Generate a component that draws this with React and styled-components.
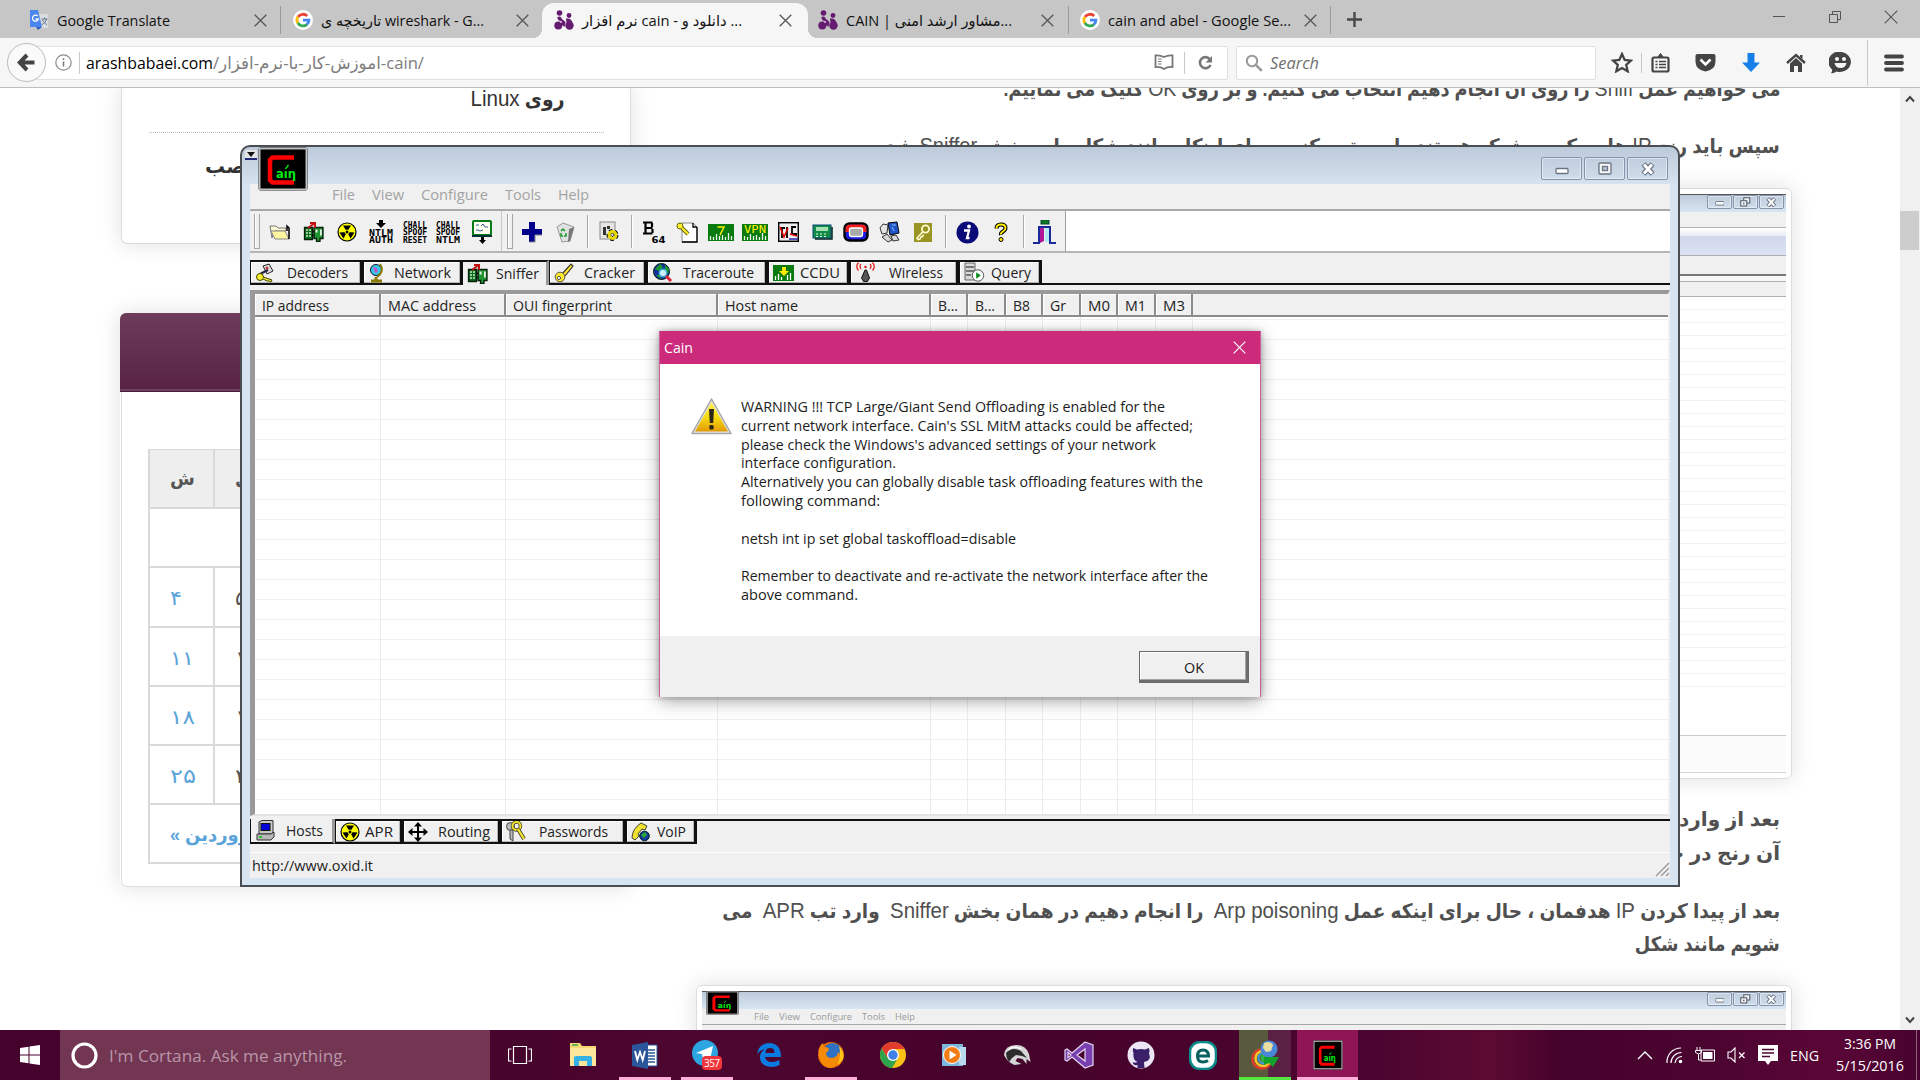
import React, { useLayoutEffect, useRef, useState } from "react";
import styled, { createGlobalStyle, css } from "styled-components";

const UI = `"Open Sans", "Noto Sans", "DejaVu Sans", sans-serif`;
const ARTICLE = `"Liberation Sans", "DejaVu Sans", sans-serif`;

const Global = createGlobalStyle`
  * { box-sizing: border-box; }
  html, body { margin: 0; padding: 0; overflow: hidden; background: #fff; }
  body { font-family: ${UI}; }
  svg { display: block; flex: none; }
`;

/* ---------- label condensed to a given width ---------- */
const FitBox = styled.span`
  display: inline-block;
  flex: none;
  width: ${(p) => p.$w}px;
  white-space: pre;
  text-align: start;
`;
const FitInner = styled.span`
  display: inline-block;
  transform-origin: ${(p) => (p.$rtl ? "100% 50%" : "0 50%")};
`;
function Fit({ w, rtl, children }) {
  const ref = useRef(null);
  const [k, setK] = useState(1);
  useLayoutEffect(() => {
    setK(w / (ref.current.getBoundingClientRect().width || w));
  }, []);
  return (
    <FitBox $w={w} dir={rtl ? "rtl" : "ltr"}>
      <FitInner ref={ref} $rtl={rtl} style={{ transform: `scaleX(${k})` }}>
        {children}
      </FitInner>
    </FitBox>
  );
}

const Screen = styled.div`
  position: relative;
  width: 1920px;
  height: 1080px;
  overflow: hidden;
  display: flex;
  flex-direction: column;
`;

/* ---------- browser chrome ---------- */
const TabStrip = styled.div`
  display: flex;
  height: 38px;
  flex: none;
  background: #c6c6c6;
`;
const Tab = styled.div`
  display: flex;
  align-items: center;
  width: ${(p) => p.$w}px;
  padding: 2px 0 0 ${(p) => p.$pad}px;
  gap: 8px;
  font-size: 15px;
  color: #111;
  position: relative;
  & > svg:last-child { margin-left: auto; margin-right: ${(p) => p.$end}px; }
  ${(p) => p.$sep && css`
    background: linear-gradient(#9a9a9a, #9a9a9a) right 6px / 1px 28px no-repeat;
  `}
`;
const ActiveTab = styled(Tab)`
  margin: 3px 2px 0 4px;
  padding-top: 0;
  padding-bottom: 1px;
  background: #f6f6f6;
  border-radius: 12px 12px 0 0;
  &::before, &::after {
    content: "";
    position: absolute;
    bottom: 0;
    width: 10px;
    height: 10px;
  }
  &::before { left: -10px; background: radial-gradient(circle at 0 0, transparent 10px, #f6f6f6 10.5px); }
  &::after { right: -10px; background: radial-gradient(circle at 100% 0, transparent 10px, #f6f6f6 10.5px); }
`;
const NewTab = styled.div`
  display: flex;
  align-items: center;
  padding: 0 0 0 16px;
`;
const WinButtons = styled.div`
  margin-left: auto;
  display: flex;
  gap: 42px;
  padding: 10px 22px 0 0;
`;
const NavBar = styled.div`
  display: flex;
  align-items: center;
  height: 50px;
  flex: none;
  padding-left: 7px;
  background: #f6f6f6;
  border-bottom: 1px solid #bdbdbd;
`;
const BackButton = styled.div`
  width: 39px;
  height: 39px;
  border: 1px solid #bbb;
  border-radius: 50%;
  background: #fafafa;
  display: grid;
  place-items: center;
  z-index: 1;
`;
const UrlBar = styled.div`
  display: flex;
  align-items: center;
  width: 1192px;
  height: 34px;
  margin-left: -10px;
  padding-left: 18px;
  background: #fff;
  border: 1px solid #e0e0e0;
  border-radius: 0 2px 2px 0;
  font-size: 17px;
  color: #000;
`;
const Rule = styled.div`
  width: 1px;
  height: ${(p) => p.$h}px;
  background: #c8c8c8;
  margin: 0 ${(p) => p.$r || 0}px 0 ${(p) => p.$l || 0}px;
`;
const UrlPath = styled.span`color: #7d7d7d;`;
const Spacer = styled.div`flex: 1;`;
const SearchBar = styled.div`
  display: flex;
  align-items: center;
  gap: 7px;
  width: 360px;
  height: 34px;
  margin-left: 8px;
  padding-left: 8px;
  background: #fff;
  border: 1px solid #e0e0e0;
  border-radius: 2px;
  font-size: 16px;
  font-style: italic;
  color: #707070;
`;
const NavIcon = styled.div`
  width: 45px;
  display: grid;
  place-items: center;
`;

/* ---------- web page ---------- */
const Viewport = styled.div`
  display: flex;
  height: 942px;
  flex: none;
  overflow: hidden;
  background: #fff;
`;
const PageBody = styled.div`
  display: flex;
  width: 1900px;
  justify-content: space-between;
  padding: 0 108px 0 120px;
  overflow: hidden;
`;
const Sidebar = styled.div`
  width: 512px;
  height: 942px;
`;
const PostsCard = styled.div`
  margin-left: 1px;
  width: 510px;
  height: 156px;
  padding: 0 26px 0 27px;
  border: 1px solid #ddd;
  border-top: 0;
  border-radius: 0 0 6px 6px;
  background: #fff;
  box-shadow: 0 0 22px rgba(0, 0, 0, 0.13);
  color: #333;
  font: bold 20px/30px ${ARTICLE};
`;
const PostLink = styled.div`
  display: flex;
  direction: ${(p) => (p.$start ? "ltr" : "rtl")};
  height: ${(p) => p.$h}px;
  padding: 0 ${(p) => (p.$start ? 0 : 40)}px 0 ${(p) => (p.$start ? 56 : 0)}px;
  align-items: flex-end;
  padding-bottom: ${(p) => p.$b}px;
  border-bottom: ${(p) => (p.$start ? "0" : "1px dotted #bbb")};
`;
const Latin = styled.span`
  font-weight: normal;
  font-size: 22px;
`;
const CalendarCard = styled.div`
  width: 511px;
  margin-top: 69px;
  height: 574px;
  border-radius: 6px;
  box-shadow: 0 0 22px rgba(0, 0, 0, 0.13);
`;
const CalendarHead = styled.div`
  height: 79px;
  border-radius: 6px 6px 0 0;
  background: linear-gradient(#6d3c5b, #582342);
  border-bottom: 1px solid #491a36;
  box-shadow: inset 0 -2px 0 #71405f;
`;
const CalendarBody = styled.div`
  height: 495px;
  margin-left: 1px;
  padding: 57px 26px 0;
  border: 1px solid #ddd;
  border-top: 0;
  border-radius: 0 0 6px 6px;
  background: #fff;
`;
const CalendarGrid = styled.div`
  display: grid;
  grid-template-columns: repeat(7, 65px);
  grid-auto-rows: 59.2px;
  gap: 0;
  border: 1px solid #d9d9d9;
  border-width: 1px 0 0 2px;
`;
const Day = styled.div`
  display: flex;
  align-items: center;
  padding: ${(p) => (p.$head ? 0 : 3)}px 0 0 20px;
  border: 1px solid #d9d9d9;
  border-width: 0 ${(p) => (p.$wide ? 0 : 2)}px 2px 0;
  grid-column: ${(p) => (p.$wide ? "1 / -1" : "auto")};
  background: ${(p) => (p.$head ? "#eee" : "#fff")};
  color: ${(p) => (p.$link ? "#5ba4d9" : "#555")};
  font: ${(p) => (p.$bold ? "bold 18px" : "normal 20px")} ${ARTICLE};
  white-space: pre;
`;

const Article = styled.div`
  width: 1096px;
  height: 942px;
  display: flex;
  flex-direction: column;
  align-items: stretch;
  color: #505050;
`;
const Line = styled.div`
  direction: rtl;
  flex: none;
  height: ${(p) => p.$h || 34}px;
  margin-top: ${(p) => p.$t || 0}px;
  padding-right: 12px;
  font: bold 20px/35px ${ARTICLE};
`;
const Shot = styled.div`
  flex: none;
  height: ${(p) => p.$h}px;
  margin-top: ${(p) => p.$t}px;
  padding: 5px;
  border: 1px solid #ddd;
  border-radius: 6px;
  background: #fff;
  box-shadow: 0 0 22px rgba(0, 0, 0, 0.13);
  display: flex;
  flex-direction: column;
  overflow: hidden;
`;
const ShotTitle = styled.div`
  display: flex;
  height: 18px;
  flex: none;
  justify-content: flex-end;
  gap: 1px;
  padding: 0 2px 0 0;
  border-top: 1px solid #555;
  background: linear-gradient(#bccad9, #d8e6f4);
`;
const ShotLogo = styled.div`
  margin: -1px auto 0 4px;
  height: 24px;
  z-index: 1;
`;
const ShotMenu = styled.div`
  display: flex;
  flex: none;
  gap: 10px;
  height: ${(p) => p.$h}px;
  align-items: center;
  padding-left: 52px;
  background: #f0f0f0;
  border-bottom: 1px solid #a8a8a8;
  font-size: 9px;
  color: #9a9a9a;
`;
const ShotBand = styled.div`
  flex: none;
  height: ${(p) => p.$h}px;
  background: ${(p) => p.$bg};
  border-bottom: ${(p) => p.$line || 0}px solid ${(p) => p.$lc || "#b0b0b0"};
`;
const ScrollTrack = styled.div`
  width: 20px;
  background: #f0f0f0;
  display: flex;
  flex-direction: column;
  align-items: center;
  padding: 7px 1px 6px 0;
`;
const ScrollThumb = styled.div`
  width: 19px;
  height: 39px;
  margin-top: 108px;
  margin-bottom: auto;
  background: #cdcdcd;
`;

/* ---------- Cain window ---------- */
const CainWindow = styled.div`
  position: absolute;
  left: 240px;
  top: 145px;
  width: 1440px;
  height: 742px;
  display: flex;
  flex-direction: column;
  padding: 0 8px 8px;
  border: 2px solid #4a4d52;
  border-radius: 10px 10px 0 0;
  background: linear-gradient(#bccad9 0, #d7e4f2 40px);
  font-size: 14px;
  color: #222;
`;
const TitleBar = styled.div`
  display: flex;
  height: 37px;
  flex: none;
  align-items: flex-start;
`;
const SysArrow = styled.div`
  width: 12px;
  height: 10px;
  margin: 3px 0 0 -5px;
  display: grid;
  place-items: center;
  background: #e4e4e4;
  border-bottom: 2px solid #222878;
`;
const LogoSlot = styled.div`
  margin-left: 1px;
  height: 30px;
  z-index: 1;
`;
const Captions = styled.div`
  display: flex;
  gap: 2px;
  margin: 10px 2px 0 auto;
`;
const Caption = styled.div`
  display: grid;
  place-items: center;
  width: ${(p) => (p.$small ? 25 : 41)}px;
  height: ${(p) => (p.$small ? 14 : 23)}px;
  border: 1px solid #8594ab;
  border-radius: 2px;
  box-shadow: inset 0 0 0 1px rgba(255, 255, 255, 0.45);
  background: linear-gradient(#c0cddd, #cfdcea);
`;
const MenuBar = styled.div`
  display: flex;
  flex: none;
  height: 27px;
  gap: 17px;
  padding: 1px 0 0 82px;
  background: #f0f0f0;
  border-bottom: 2px solid #a9a9a9;
  font-size: 14px;
  color: #a3a3a3;
`;
const ToolRow = styled.div`
  display: flex;
  flex: none;
  height: 42px;
  background: #fff;
  border-bottom: 2px solid #b5b5b5;
`;
const ToolBar = styled.div`
  display: flex;
  align-items: center;
  width: 816px;
  background: #f0f0f0;
  border-right: 1px solid #a0a0a0;
`;
const Grip = styled.div`
  width: 6px;
  height: 35px;
  margin: 0 ${(p) => p.$r}px 0 ${(p) => p.$l}px;
  border: 1px solid #a5a5a5;
  border-width: 0 1px 1px 1px;
  box-shadow: inset 1px 0 0 #fff;
`;
const ToolButton = styled.div`
  width: 33.7px;
  display: grid;
  place-items: center;
  padding-top: 2px;
`;
const ToolSep = styled.div`
  width: 10.5px;
  height: 33px;
  background: linear-gradient(90deg, transparent 5px, #a8a8a8 5px, #a8a8a8 6px, #fff 6px, #fff 7px, transparent 7px);
`;
const TabRow = styled.div`
  display: flex;
  flex: none;
  height: ${(p) => p.$h}px;
  align-items: flex-start;
  padding-top: ${(p) => p.$t}px;
  background: #f0f0f0;
`;
const CainTab = styled.div`
  display: flex;
  align-items: center;
  height: 25px;
  width: ${(p) => p.$w}px;
  padding: 0 0 0 4px;
  border: 2px solid #111;
  border-width: ${(p) => (p.$on ? (p.$low ? "0 3px 2px 1px" : "2px 3px 0 0") : "2px 3px 2px 1px")};
  border-right-color: ${(p) => (p.$on ? "#999" : "#111")};
  background: #f0f0f0;
  box-shadow: ${(p) => (p.$on ? "none" : "inset -1px -1px 0 #b5b5b5, inset 1px 1px 0 #fff")};
  & > span { margin-left: auto; margin-right: ${(p) => p.$r}px; }
`;
const TabBaseline = styled.div`
  flex: 1;
  height: 25px;
  border: 0 solid #111;
  border-width: ${(p) => (p.$low ? "2px 0 0" : "0 0 2px")};
`;
const ListFrame = styled.div`
  display: flex;
  flex-direction: column;
  flex: none;
  height: 526px;
  margin: 0;
  border: solid #999;
  border-width: 4px 2px 2px 5px;
  border-right-color: #f0f0f0;
  border-bottom-color: #e3e3e3;
  background: #fff;
`;
const ListHead = styled.div`
  display: flex;
  flex: none;
  height: 23px;
  background: #f0f0f0;
  border-bottom: 2px solid #8c8c8c;
`;
const HeadCell = styled.div`
  width: ${(p) => p.$w}px;
  padding-left: 7px;
  line-height: 23px;
  border-right: 2px solid #8c8c8c;
  box-shadow: inset 1px 1px 0 #fff;
`;
const ListBody = styled.div`
  flex: 1;
  display: flex;
  background: repeating-linear-gradient(transparent 0, transparent 19px, #efefef 19px, #efefef 20px) 0 -17px / 100% 600px;
`;
const ListColumn = styled.div`
  width: ${(p) => p.$w}px;
  border-right: 1px solid #ececec;
`;
const StatusBar = styled.div`
  display: flex;
  justify-content: space-between;
  flex: none;
  height: 26px;
  padding: 3px 0 0 2px;
  background: #f0f0f0;
  border-top: 1px solid #fff;
`;

/* ---------- warning dialog ---------- */
const Dialog = styled.div`
  position: absolute;
  left: 659px;
  top: 331px;
  width: 602px;
  height: 366px;
  display: flex;
  flex-direction: column;
  border: 1px solid #d0609b;
  border-width: 0 1px;
  background: #fff;
  box-shadow: 0 4px 16px rgba(0, 0, 0, 0.35), 0 0 5px rgba(0, 0, 0, 0.25);
  color: #1c1c1c;
`;
const DialogTitle = styled.div`
  display: flex;
  justify-content: space-between;
  align-items: center;
  height: 33px;
  padding: 0 14px 0 4px;
  background: #cc2a7a;
  color: #fff;
  font-size: 14px;
`;
const DialogBody = styled.div`
  display: flex;
  flex: 1;
  padding: 33px 0 0 31px;
  gap: 9px;
`;
const Message = styled.div`
  display: flex;
  flex-direction: column;
  font-size: 14px;
  line-height: 19px;
`;
const MessageLine = styled.div`height: 18.8px;`;
const IconDrop = styled.div`padding-top: 1px;`;
const DialogFoot = styled.div`
  display: flex;
  justify-content: flex-end;
  height: 61px;
  padding: 15px 11px 0 0;
  background: #f0f0f0;
`;
const OkButton = styled.div`
  display: grid;
  place-items: center;
  width: 110px;
  height: 32px;
  border: 1px solid #696969;
  box-shadow: inset -2px -2px 0 #6e6e6e, inset -3px -3px 0 #a5a5a5, inset 1px 1px 0 #fff;
  font-size: 14px;
`;

/* ---------- taskbar ---------- */
const TaskBar = styled.div`
  display: flex;
  align-items: stretch;
  height: 50px;
  flex: none;
  background: linear-gradient(90deg, #45022c 0, #47042c 520px, #4d0630 700px, #45022b 1000px, #4b0530 1380px, #5c0a31 1490px, #45022c 1560px, #4a0430 1700px, #5a0636 1830px, #480330 1920px);
  color: #fff;
`;
const StartButton = styled.div`
  width: 60px;
  display: grid;
  place-items: center;
`;
const Cortana = styled.div`
  display: flex;
  align-items: center;
  gap: 11px;
  width: 430px;
  padding-left: 11px;
  background: #723552;
  color: #b996a8;
  font-size: 17px;
`;
const TaskButton = styled.div`
  display: grid;
  place-items: center;
  width: ${(p) => p.$w || 52}px;
  margin-left: ${(p) => p.$m ?? 10}px;
  background: ${(p) => p.$bg || "transparent"};
  border-bottom: 3px solid ${(p) => p.$line || "transparent"};
  padding-top: 3px;
`;
const Tray = styled.div`
  display: flex;
  align-items: center;
  margin-left: auto;
  gap: 12px;
  font-size: 14px;
`;
const Clock = styled.div`
  display: flex;
  flex-direction: column;
  align-items: center;
  gap: 3px;
  line-height: 19px;
  font-size: 14px;
  margin: -2px 0 0 5px;
`;
const Peek = styled.div`
  width: 4px;
  height: 50px;
  border-left: 1px solid #8d6279;
`;

/* ---------- icons ---------- */
const I = ({ w = 24, h = w, box, children, ...rest }) => (
  <svg width={w} height={h} viewBox={box || `0 0 ${w} ${h}`} fill="none" {...rest}>{children}</svg>
);
const CloseX = ({ s = 13, c = "#555", t = 1.3 }) => (
  <I w={s}><path d={`M.7 .7L${s - 0.7} ${s - 0.7}M${s - 0.7} .7L.7 ${s - 0.7}`} stroke={c} strokeWidth={t} /></I>
);
const GoogleG = () => (
  <I w={20}>
    <circle cx="10" cy="10" r="10" fill="#fff" />
    <g strokeWidth="2.8">
      <path d="M14.2 6A6 6 0 0 0 5 6.9" stroke="#ea4335" />
      <path d="M4.9 6.8a6 6 0 0 0 0 6.4" stroke="#fbbc05" />
      <path d="M4.8 13a6 6 0 0 0 9.2 1.4" stroke="#34a853" />
      <path d="M10 10.2h5.9a6 6 0 0 1-2 4.3" stroke="#4285f4" />
    </g>
  </I>
);
const TranslateIcon = () => (
  <I w={20}>
    <path d="M8 4h11v14H11z" fill="#dadce0" />
    <path d="M1 0h8l4 17H1z" fill="#4a86ee" />
    <path d="M7 17h6l-4 3z" fill="#2f5fc0" />
    <path d="M8.8 6.2A3 3 0 1 0 9.4 9H6.5" stroke="#fff" strokeWidth="1.3" />
    <path d="M12.5 9h6M15.500 7.500v1.500M17.500 9c-.6 2.500-2.500 4.500-4.500 5.500M13.500 10c.8 2 2.500 3.500 4.500 4.500" stroke="#5d7388" />
  </I>
);
const PurpleDots = () => (
  <I w={20}>
    <g fill="#651c70">
      <circle cx="5.500" cy="3" r="2.800" /><circle cx="15" cy="5.500" r="2.400" />
      <path d="M3.500 7c2-1.500 5 0 4.500 4-2 .5-5-1-4.500-4zM12 8.500c4.500-.5 7 2 6 6-4 1-6-2-6-6z" />
      <circle cx="4.300" cy="15.500" r="4" /><circle cx="15.500" cy="15.500" r="4.200" />
      <path d="M8 9l3.500 3-1 5-4-3z" />
    </g>
    <circle cx="7" cy="12" r="1" fill="#d9b7de" />
  </I>
);
const Gear = ({ cx, cy, r }) => (
  <g>
    <circle cx={cx} cy={cy} r={r} stroke="#000" strokeWidth="5" strokeDasharray="2.500 2" />
    <circle cx={cx} cy={cy} r={r} stroke="#e6d800" strokeWidth="3" />
  </g>
);
const Radiation = () => (
  <I w={20}>
    <circle cx="10" cy="10" r="9" fill="#ff0" stroke="#000" strokeWidth="1.200" />
    <path d="M10 10L6 3.500h8zM10 10l7.500.5-4 6zM10 10l-7.500.5 4 6z" fill="#000" />
    <circle cx="10" cy="10" r="2" fill="#000" stroke="#ff0" />
  </I>
);
const SnifferIcon = () => (
  <I w={22} h={20}>
    <path d="M1.500 5.500h8v12h-8z" fill="#0a6a1c" stroke="#031f08" strokeWidth="1.300" />
    <path d="M3 8h2M6 8h2M3 11h2M6 11h2M3 14h2M6 14h2" stroke="#c8ecc8" strokeWidth="1.500" />
    <path d="M11 5.500h9v11h-3v3h-3.500v-3H11z" fill="#1f9430" stroke="#031f08" strokeWidth="1.300" />
    <path d="M12.500 7.500h2v3h-2zM17 7.500h1.800v6H17z" fill="#e5efe5" /><path d="M9.500 9.500h2M9.500 13.500h2" stroke="#111" strokeWidth="2" />
    <path d="M5 6L11 1.500M7 1h5v5" stroke="#c01010" strokeWidth="2" />
  </I>
);
const Folder = () => (
  <I w={22} h={18}>
    <path d="M1 3h6l2 2h8v3H5L3 15z" fill="#fffbd0" stroke="#777" />
    <path d="M2 8h14l4 8H6z" fill="#fff6a0" stroke="#888" /><path d="M20 16V5l-2-2v5" stroke="#000" strokeWidth="1.500" />
  </I>
);
const PixelWords = ({ rows, arrow }) => (
  <I w={26} h={24}>
    {arrow && <path d="M11 0h4v3h3l-5 5-5-5h3z" fill="#000" />}
    {rows.map((r, i) => (
      <text key={r + i} x="1" y={(arrow ? 15.500 : 7.500) + i * 7.700} textLength="24" lengthAdjust="spacingAndGlyphs"
        fontFamily="DejaVu Sans Mono, monospace" fontWeight="bold" fontSize="9" fill="#000">{r}</text>
    ))}
  </I>
);
const MonitorDown = () => (
  <I w={22} h={25}>
    <rect x="2" y="1" width="18" height="14" rx="1" fill="#fffff0" stroke="#087a18" strokeWidth="2" />
    <path d="M5 5h3M10 6l2-2 2 3h3M5 10h2l2 1 3-1" stroke="#335fa0" /><path d="M1 16h20" stroke="#033" strokeWidth="2" />
    <path d="M10 17h3v3h2l-3.500 4L8 20h2z" fill="#000" />
  </I>
);
const Plus = () => <I w={22}><path d="M8 1h6v7h7v6h-7v7H8v-7H1V8h7z" fill="#00008b" /><path d="M14 21h-6M21 14h-7v7" stroke="#8a8a8a" /></I>;
const Bin = () => (
  <I w={22}>
    <path d="M3 6l6-4 11 4-4 14-8 1z" fill="#e0e0e0" stroke="#999" /><path d="M15 8l5-2-4 14-2 1z" fill="#777" />
    <path d="M7 10l2-2 2 2M12 12v3h-2M7 12v3h2" stroke="#1a9a2a" strokeWidth="1.500" />
  </I>
);
const ConfigIcon = () => (
  <I w={21} h={22}><rect x="1" y="1" width="15" height="17" fill="#e4e4e4" stroke="#888" /><path d="M4 6h3v8H4zM8 5h3v3H8z" fill="#333" /><Gear cx={13.500} cy={14} r={3.500} /></I>
);
const Base64 = () => (
  <I w={24}>
    <path d="M1 2.500h9.500M1 13.500h9.500M3.500 2.500v11M10 3v4M10.500 9v4M3 8h7.500" stroke="#000" strokeWidth="2.200" />
    <text x="9.500" y="23" fontSize="9.500" fontWeight="bold" textLength="14" lengthAdjust="spacingAndGlyphs" fontFamily="DejaVu Sans, sans-serif" fill="#000">64</text>
  </I>
);
const KeyDoc = () => (
  <I w={22}><path d="M6 2h11l4 4v15H6z" fill="#fff" stroke="#888" /><path d="M17 2v4h4M21 6v15H6" stroke="#000" strokeWidth="1.300" />
    <circle cx="4" cy="5" r="3" fill="#fe3" stroke="#660" /><path d="M6 7l6 6" stroke="#660" strokeWidth="4" /><path d="M6 7l6 6" stroke="#fe3" strokeWidth="2" /></I>
);
const GreenBars = ({ label }) => (
  <I w={26} h={17}>
    <rect width="26" height="17" fill="#087a0e" />
    <path d="M2.500 16v-4M5.500 16v-3M8.500 16v-6M11.500 16v-4M14.500 16v-5M17.500 16v-3M20.500 16v-7M23.500 16v-4" stroke="#e8f5e8" strokeWidth="1.300" />
    {label === "7"
      ? <path d="M9.500 3h6.500l-4 8" stroke="#fff200" strokeWidth="1.500" />
      : <text x="2" y="9" fontSize="10" textLength="22" lengthAdjust="spacingAndGlyphs" fontFamily="DejaVu Sans Mono, monospace" fill="#fff200">{label}</text>}
  </I>
);
const RdcIcon = () => (
  <I w={21} h={20}><rect x=".7" y=".7" width="19.600" height="18.600" fill="#eee" stroke="#000" strokeWidth="1.500" />
    <path d="M4 16V6h3M9 16V5M18 5h-4v7h5" stroke="#000" strokeWidth="1.800" /><path d="M2 5l4 10 4-9M12 12l7 2" stroke="#d00" strokeWidth="1.600" /><path d="M11 17h9" stroke="#22a" strokeWidth="1.500" /></I>
);
const CardIcon = () => (
  <I w={21} h={16}><rect x="1" y="1" width="18" height="13" fill="#13894a" stroke="#064a78" /><path d="M3 15h17V3" stroke="#022" strokeWidth="1.500" /><rect x="4" y="3" width="12" height="4" fill="#a5e0b0" /><path d="M4 10h2M8 10h2M12 10h2M4 12.500h2M8 12.500h2M12 12.500h2" stroke="#dfd" /></I>
);
const RingIcon = () => (
  <I w={26} h={20}><rect x="1.500" y="1.500" width="23" height="17" rx="5" fill="#1a1ae0" stroke="#000" strokeWidth="2.400" />
    <path d="M2.500 10V7q0-4.500 4.500-4.500h12q4.500 0 4.500 4.500v3z" fill="#f02020" /><rect x="6.500" y="6" width="13" height="8.500" rx="2" fill="#aaa" stroke="#fff" strokeWidth="1.300" /></I>
);
const Computers = () => (
  <I w={22}><path d="M9 2l9-1 2 11-9 2z" fill="#1f55c8" stroke="#000" /><path d="M1 7l3-4 5 1-1 8-5 1z" fill="#e5e5e5" stroke="#333" /><path d="M3 16l5-3 5 6-4 2zM12 15l5-1 3 5-6 1z" fill="#d8d8d8" stroke="#333" /><path d="M13 4l4 0M13 6l2 4" stroke="#7cc2ff" /></I>
);
const GoldKey = () => (
  <I w={18} h={19}><rect width="18" height="19" fill="#9a9423" /><circle cx="11.500" cy="6" r="3.600" stroke="#fffbd0" strokeWidth="1.800" /><path d="M9 8.500L3 15l1 1.500 2-.5 1-2 1.500-.5 1-2" stroke="#fffbd0" strokeWidth="1.600" /></I>
);
const InfoIcon = () => (
  <I w={23}><circle cx="11.500" cy="11.500" r="11" fill="#0a0a78" /><circle cx="13" cy="5.500" r="1.900" fill="#fff" /><path d="M8 9.500h5l-2 7.500h2.500" stroke="#fff" strokeWidth="2.300" /></I>
);
const HelpIcon = () => (
  <I w={14} h={21}><path d="M2.500 6.500q0-4 4.500-4t4.500 3.500q0 2-2.500 3.500T7 13" stroke="#000" strokeWidth="4" /><path d="M2.500 6.500q0-4 4.500-4t4.500 3.500q0 2-2.500 3.500T7 12.500" stroke="#ffec00" strokeWidth="1.900" /><circle cx="7" cy="17.500" r="2" fill="#ffec00" stroke="#000" /></I>
);
const DoorIcon = () => (
  <I w={24} h={25}><rect x="8" y="0" width="8" height="4" fill="#0a7a1c" stroke="#043" /><path d="M0 23h6V7h11v16h6" stroke="#1a2a9a" strokeWidth="2" /><path d="M7 8h4v13l-4 2z" fill="#b0189a" /><path d="M12 8h4v14h-4z" fill="#aeeaf2" /></I>
);
const DecoderIcon = () => (
  <I w={20}><path d="M8 3l6-2 4 7-6 3z" fill="#ddd" stroke="#222" /><circle cx="12" cy="5" r="1.500" fill="#c33" /><path d="M5 11l8-4" stroke="#224" strokeWidth="2" /><circle cx="5" cy="14" r="3.500" fill="#f6ee30" stroke="#440" /><path d="M8 14l9 3-1 2-2-1-2 0-4-2" fill="#f6ee30" stroke="#440" /></I>
);
const GlobeStand = () => (
  <I w={18} h={20}><circle cx="8" cy="7" r="5.500" fill="#35c8e8" stroke="#113" /><path d="M5 4l4 1 1 4-3 1z" fill="#c05ac8" /><path d="M12 1q5 7-3 13" stroke="#8a7a00" strokeWidth="2" /><path d="M8 14v3M3 18h11" stroke="#8a7a00" strokeWidth="3" /></I>
);
const KeyIcon = () => (
  <I w={20}><path d="M8 11L17 1l2 2-8 10" fill="#ffe92a" stroke="#333" strokeWidth="1.200" /><circle cx="6" cy="14" r="4.800" fill="#ffe92a" stroke="#555" /><circle cx="5" cy="15" r="1.600" fill="#fff" stroke="#555" /></I>
);
const TraceIcon = () => (
  <I w={21}><circle cx="9.500" cy="9.500" r="8" fill="#16309a" stroke="#021" /><path d="M3 7l5-5 3 3-4 4zM13 3l4 4-1 5-3-3zM4 13l4 0 1 4z" fill="#1d9a2b" /><circle cx="11" cy="11" r="3.800" fill="#cfefff" stroke="#3ac" strokeWidth="1.500" /><path d="M14 14l5 5" stroke="#e0203a" strokeWidth="3" /></I>
);
const CcduIcon = () => (
  <I w={21} h={16}><rect width="21" height="16" fill="#087a0e" /><path d="M2.500 15v-4M5.500 15v-6M8.500 15v-3M14.500 15v-5M17.500 15v-7" stroke="#fff" strokeWidth="1.300" /><path d="M9 2h4v4h3l-5 5-5-5h3z" fill="#ffe800" /></I>
);
const WirelessIcon = () => (
  <I w={21}><path d="M6 2Q4 4 6 7M3.500 .5Q0 4.500 3.500 8.500M15 2q2 2 0 5M17.500 .5q3.500 4 0 8" stroke="#e02020" strokeWidth="1.300" /><circle cx="10.500" cy="5" r="1.300" fill="#e02020" /><path d="M10 8h1.500l3 8-2 3.500h-4L6.500 16z" fill="#555" stroke="#111" /></I>
);
const QueryIcon = () => (
  <I w={21}><path d="M1 1h10v17H1z" fill="#d8d8d8" stroke="#666" /><path d="M2 5h8M2 9h8M2 13h5" stroke="#555" strokeWidth="1.500" /><circle cx="14" cy="13.500" r="5.700" fill="#fff" stroke="#555" /><path d="M12.200 10.200v6.600l4.600-3.300z" fill="#0a8a1a" /></I>
);
const HostIcon = () => (
  <I w={22} h={21}><path d="M4 2l3-1.500h11V12l-2 2H4z" fill="#c8c8c8" stroke="#333" /><rect x="6" y="3.500" width="9" height="7" fill="#0000d8" stroke="#111" /><path d="M2 14h14l3-2v5l-3 3H2z" fill="#b8b8b8" stroke="#333" /><path d="M4 17h3" stroke="#0c0" strokeWidth="1.500" /></I>
);
const MoveIcon = () => (
  <I w={20}><path d="M10 0l4 4.500h-3v4.500h4.500V6L20 10l-4.500 4v-3H11v4.500h3L10 20l-4-4.500h3V11H4.500v3L0 10l4.500-4v3H9V4.500H6z" fill="#000" /></I>
);
const KeysIcon = () => (
  <I w={20} h={21}><circle cx="4.500" cy="5.500" r="4" fill="#bbb" stroke="#444" /><path d="M4 9h3v11l-3-2z" fill="#bbb" stroke="#444" /><circle cx="10.500" cy="5" r="4" stroke="#443" strokeWidth="3.500" /><circle cx="10.500" cy="5" r="4" stroke="#f2e02a" strokeWidth="2" /><path d="M12 8l6 10" stroke="#443" strokeWidth="4" /><path d="M12 8l6 10" stroke="#f2e02a" strokeWidth="2.400" /></I>
);
const VoipIcon = () => (
  <I w={20}><path d="M10 1l6 3-2 4-3-1-4 5 1 2-4 4-3-2Q1 7 10 1z" fill="#f0e030" stroke="#443" /><circle cx="13.500" cy="14" r="4.800" fill="#123a9a" stroke="#022" /><path d="M10 13l4-3 2 3-3 3z" fill="#2da82f" /></I>
);
const WarnIcon = () => (
  <I w={41} h={37}>
    <defs><linearGradient id="warn" x1="0" y1="0" x2="0" y2="1"><stop offset="0" stopColor="#fff04a" /><stop offset=".5" stopColor="#f7dc12" /><stop offset="1" stopColor="#e39a05" /></linearGradient></defs>
    <path d="M20.500 1L40 35.500H1z" fill="#e4e4e4" stroke="#a5a5a5" strokeWidth="1.500" strokeLinejoin="round" />
    <path d="M20.500 4.500L37 33.500H4z" fill="url(#warn)" />
    <path d="M18 11h5l-.8 14h-3.400z" fill="#2b2618" /><rect x="18.300" y="27" width="4.400" height="4.500" rx="1.500" fill="#2b2618" />
  </I>
);
const CainLogo = ({ w = 50, h = 44 }) => (
  <I w={w} h={h} box="0 0 50 44" preserveAspectRatio="none">
    <rect x=".5" y=".5" width="49" height="43" rx="2" fill="#333" />
    <rect x="1.800" y="1.800" width="46.400" height="40.400" fill="#000" stroke="#e8e8e8" strokeWidth="1.200" />
    <path d="M36 10.500H14.500L12 13v20l2.500 2.500H36" stroke="#f00" strokeWidth="4.500" />
    <path d="M27.500 22l3-4" stroke="#0e1" strokeWidth="1.300" />
    <text x="18" y="31" fontFamily="DejaVu Sans, sans-serif" fontWeight="bold" fontSize="13" fill="#00e812" textLength="20" lengthAdjust="spacingAndGlyphs">aıη</text>
  </I>
);
const CapMin = ({ s = 1 }) => <I w={14 * s} box="0 0 14 14"><rect x="1" y="6.500" width="12" height="5" rx="1" fill="#fff" stroke="#6b7484" strokeWidth="1.300" /></I>;
const CapMax = () => <I w={14}><rect x="1" y="1" width="12" height="11" rx="1" fill="#f5f5f5" stroke="#6b7484" strokeWidth="1.300" /><rect x="4.500" y="4.500" width="5" height="4" fill="#b8c4d4" stroke="#6b7484" strokeWidth="1.300" /></I>;
const CapRestore = ({ s = 1 }) => <I w={14 * s} box="0 0 14 14"><rect x="5" y="1" width="8" height="7" fill="#f5f5f5" stroke="#5b6575" strokeWidth="1.500" /><rect x="1" y="5" width="8" height="7" fill="#f5f5f5" stroke="#5b6575" strokeWidth="1.500" /><path d="M4 8.500h2" stroke="#5b6575" strokeWidth="2" /></I>;
const CapX = ({ s = 1 }) => <I w={14 * s} box="0 0 14 14"><path d="M2.500 2l9 10M11.500 2l-9 10" stroke="#6b7484" strokeWidth="5.400" /><path d="M3 2.500l8 9M11 2.500l-8 9" stroke="#fff" strokeWidth="2.900" /></I>;
const SmallCaptions = () => (
  <>
    <Caption $small><CapMin s={0.7} /></Caption>
    <Caption $small><CapRestore s={0.75} /></Caption>
    <Caption $small><CapX s={0.75} /></Caption>
  </>
);

/* ---------- data ---------- */
const columns = [
  ["IP address", 126, 67], ["MAC address", 125, 88], ["OUI fingerprint", 212, 99], ["Host name", 213, 73],
  ["B...", 37, 20], ["B...", 38, 20], ["B8", 37, 17], ["Gr", 38, 16], ["M0", 37, 22], ["M1", 38, 21], ["M3", 37, 22],
];
const topTabs = [
  ["Decoders", 113, 61, 12, DecoderIcon], ["Network", 100, 57, 9, GlobeStand], ["Sniffer", 86, 43, 7, SnifferIcon],
  ["Cracker", 98, 51, 9, KeyIcon], ["Traceroute", 121, 71, 11, TraceIcon], ["CCDU", 82, 40, 7, CcduIcon],
  ["Wireless", 109, 54, 13, WirelessIcon], ["Query", 83, 40, 8, QueryIcon],
];
const lowTabs = [
  ["Hosts", 85, 37, 9, HostIcon], ["APR", 68, 28, 7, Radiation], ["Routing", 98, 52, 8, MoveIcon],
  ["Passwords", 125, 69, 15, KeysIcon], ["VoIP", 71, 29, 8, VoipIcon],
];
const menu = [["File", 23], ["View", 32], ["Configure", 67], ["Tools", 36], ["Help", 31]];
const message = [
  ["WARNING !!! TCP Large/Giant Send Offloading is enabled for the", 424],
  ["current network interface. Cain's SSL MitM attacks could be affected;", 452],
  ["please check the Windows's advanced settings of your network", 415],
  ["interface configuration.", 155],
  ["Alternatively you can globally disable task offloading features with the", 462],
  ["following command:", 139],
  null,
  ["netsh int ip set global taskoffload=disable", 275],
  null,
  ["Remember to deactivate and re-activate the network interface after the", 467],
  ["above command.", 117],
];
const weeks = [["۴", "۵", 12], ["۱۱", "۱۲", 24], ["۱۸", "۱۹", 25], ["۲۵", "۲۶", 26]];

function BrowserChrome() {
  return (
    <>
      <TabStrip>
        <Tab $w={281} $pad={29} $end={14} $sep><TranslateIcon /><Fit w={113}>Google Translate</Fit><CloseX /></Tab>
        <Tab $w={257} $pad={12} $end={9}><GoogleG /><Fit w={163}>تاریخچه ی wireshark - G...</Fit><CloseX /></Tab>
        <ActiveTab $w={266} $pad={12} $end={16}><PurpleDots /><Fit w={160}>نرم افزار cain - دانلود و ...</Fit><CloseX /></ActiveTab>
        <Tab $w={259} $pad={8} $end={15} $sep><PurpleDots /><Fit w={166}>CAIN | مشاور ارشد امنی...</Fit><CloseX /></Tab>
        <Tab $w={262} $pad={11} $end={14} $sep><GoogleG /><Fit w={183}>cain and abel - Google Se...</Fit><CloseX /></Tab>
        <NewTab><I w={15}><path d="M7.500 0v15M0 7.500h15" stroke="#484848" strokeWidth="2.400" /></I></NewTab>
        <WinButtons>
          <I w={14}><path d="M1 6.500h12" stroke="#555" /></I>
          <I w={14}><path d="M1.500 4.500h8v8h-8zM4.500 4V1.500h8v8H10" stroke="#555" /></I>
          <CloseX s={14} t={1.1} />
        </WinButtons>
      </TabStrip>
      <NavBar>
        <BackButton><I w={19}><path d="M17.500 9.500H3M10 2L2.800 9.500 10 17" stroke="#444" strokeWidth="4" /></I></BackButton>
        <UrlBar>
          <I w={17}><circle cx="8.500" cy="8.500" r="7.700" stroke="#8c8c8c" strokeWidth="1.200" /><path d="M8.500 7.500v5M8.500 4.300v1.700" stroke="#777" strokeWidth="1.500" /></I>
          <Rule $h={22} $l={7} $r={6} />
          <Fit w={127}>arashbabaei.com</Fit>
          <Fit w={211}><UrlPath>/اموزش-کار-با-نرم-افزار-cain/</UrlPath></Fit>
          <Spacer />
          <I w={20} h={17}><path d="M10 3Q6 1 1.500 1.500V13q5-.5 8.500 2 3.500-2.500 8.500-2V1.500Q14 1 10 3z" stroke="#777" strokeWidth="1.800" /><path d="M4 5h3.500M4 7.500h3.500M4 10h3.500" stroke="#777" /></I>
          <Rule $h={22} $l={10} $r={12} />
          <I w={16}><path d="M12.800 4.200A5.500 5.500 0 1 0 13.500 10" stroke="#777" strokeWidth="2.600" /><path d="M15 1v6.500H8.500z" fill="#777" /></I>
          <Rule $h={0} $r={13} />
        </UrlBar>
        <SearchBar>
          <I w={18}><circle cx="7" cy="7" r="5.200" stroke="#999" strokeWidth="2" /><path d="M10.800 10.800l6 6" stroke="#999" strokeWidth="2.600" /></I>
          <Fit w={49}>Search</Fit>
        </SearchBar>
        <Rule $h={0} $l={2} />
        <NavIcon><I w={22} h={21}><path d="M11 2l2.700 6 6.300.6-4.800 4.300 1.500 6.400L11 16l-5.700 3.300 1.500-6.400L2 8.600 8.300 8z" stroke="#444" strokeWidth="2.300" /></I></NavIcon>
        <Rule $h={20} $l={-3} $r={-4} />
        <NavIcon><I w={19} h={20}><rect x="1.500" y="4.500" width="16" height="14" rx="1.500" stroke="#444" strokeWidth="2.200" /><path d="M6.500 4.500L9.500 .5l3 4z" fill="#444" stroke="#444" /><path d="M4.500 8.500h2M8 8.500h7M4.500 11.500h2M8 11.500h7M4.500 14.500h2M8 14.500h7" stroke="#444" strokeWidth="1.600" /></I></NavIcon>
        <NavIcon><I w={21} h={19}><path d="M2.500 1h16Q20.500 1 20.500 3v6q-.5 8-10 9.500Q1 17 .5 9V3q0-2 2-2z" fill="#444" /><path d="M5.500 6.500l5 5 5-5" stroke="#fff" strokeWidth="2.600" /></I></NavIcon>
        <NavIcon><I w={18} h={19}><path d="M5.500 0h7v9.500H18L9 19 0 9.500h5.500z" fill="#1680e8" /></I></NavIcon>
        <NavIcon><I w={20} h={19}><path d="M1 10L10 2l9 8" stroke="#444" strokeWidth="2.400" /><path d="M4 10.500L10 5l6 5.500V19h-4v-6H8v6H4zM14 2h2.500v4L14 4z" fill="#444" /></I></NavIcon>
        <NavIcon><I w={23} h={22}><path d="M11.500 0a11 10 0 1 1-4 19.500Q4 22 2 21q1.500-1.500 1-3.500A10 10 0 0 1 11.500 0z" fill="#444" /><circle cx="8" cy="7" r="2" fill="#f6f6f6" /><circle cx="15" cy="7" r="2" fill="#f6f6f6" /><path d="M5.500 11h12q-1 5-6 5t-6-5z" fill="#f6f6f6" /></I></NavIcon>
        <Rule $h={46} $l={4} $r={16} />
        <I w={20} h={18}><path d="M2 2.500h16M2 9h16M2 15.500h16" stroke="#444" strokeWidth="3.800" strokeLinecap="round" /></I>
      </NavBar>
    </>
  );
}

function WebPage() {
  return (
    <Viewport>
      <PageBody>
        <Sidebar>
          <PostsCard>
            <PostLink $h={45} $b={18}><Fit w={94} rtl>روی <Latin>Linux</Latin></Fit></PostLink>
            <PostLink $h={48} $b={0} $start>نصب</PostLink>
          </PostsCard>
          <CalendarCard>
            <CalendarHead />
            <CalendarBody>
              <CalendarGrid>
                <Day $head $bold>ش</Day><Day $head $bold>ی</Day>
                {[1, 2, 3, 4, 5].map((n) => <Day key={n} $head />)}
                <Day $wide />
                {weeks.map(([a, b, w]) => (
                  <React.Fragment key={a}>
                    <Day $link><Fit w={w}>{a}</Fit></Day><Day><Fit w={w}>{b}</Fit></Day>
                    {[1, 2, 3, 4, 5].map((n) => <Day key={n} />)}
                  </React.Fragment>
                ))}
                <Day $wide $link $bold>« فروردین</Day>
              </CalendarGrid>
            </CalendarBody>
          </CalendarCard>
        </Sidebar>
        <Article>
          <Line $t={-17}><Fit w={777} rtl>می خواهیم عمل <Latin>Sniff</Latin> را روی آن انجام دهیم انتخاب می کنیم. و بر روی <Latin>OK</Latin> کلیک می نماییم.</Fit></Line>
          <Line $t={23}><Fit w={905} rtl>سپس باید رنج <Latin>IP</Latin> هایی که در شبکه هستند را جستجو کنیم. برای اینکار مانند شکل وارد بخش <Latin>Sniffer</Latin> شده</Fit></Line>
          <Shot $t={26} $h={591}>
            <ShotTitle><SmallCaptions /></ShotTitle>
            <ShotBand $h={16} $bg="#f0f0f0" $line={1} />
            <ShotBand $h={8} $bg="linear-gradient(#fff, #e8ecf6)" />
            <ShotBand $h={20} $bg="linear-gradient(#d1d7ec, #dde3f5)" $line={1} />
            <ShotBand $h={20} $bg="#f0f0f0" $line={2} $lc="#777" />
            <ShotBand $h={6} $bg="#f7f7f7" $line={1} />
            <ShotBand $h={15} $bg="#f0f0f0" $line={1} />
            <ShotBand $h={400} $bg="repeating-linear-gradient(#fff 0, #fff 12px, #f2f2f2 12px, #f2f2f2 13px)" />
            <ShotBand $h={39} $bg="#fff" $line={1} $lc="#ccc" />
            <ShotBand $h={37} $bg="#fbfbfb" $line={1} $lc="#d5d5d5" />
          </Shot>
          <Line $t={23}>بعد از وارد کردن</Line>
          <Line>آن رنج در حال</Line>
          <Line $t={23}><Fit w={1058} rtl>بعد از پیدا کردن <Latin>IP</Latin> هدفمان ، حال برای اینکه عمل <Latin>Arp poisoning</Latin>  را انجام دهیم در همان بخش <Latin>Sniffer</Latin>  وارد تب <Latin>APR</Latin>  می</Fit></Line>
          <Line><Fit w={145} rtl>شویم مانند شکل</Fit></Line>
          <Shot $t={24} $h={70}>
            <ShotTitle><ShotLogo><CainLogo w={33} h={24} /></ShotLogo><SmallCaptions /></ShotTitle>
            <ShotMenu $h={16}>
              <Fit w={15}>File</Fit><Fit w={21}>View</Fit><Fit w={42}>Configure</Fit><Fit w={23}>Tools</Fit><Fit w={20}>Help</Fit>
            </ShotMenu>
            <ShotBand $h={20} $bg="#f0f0f0" />
          </Shot>
        </Article>
      </PageBody>
      <ScrollTrack>
        <I w={10} h={8}><path d="M1 6.500L5 2l4 4.500" stroke="#444" strokeWidth="2" /></I>
        <ScrollThumb />
        <I w={10} h={8}><path d="M1 1.500L5 6l4-4.500" stroke="#444" strokeWidth="2" /></I>
      </ScrollTrack>
    </Viewport>
  );
}

const Tool = ({ children }) => <ToolButton>{children}</ToolButton>;

function Cain() {
  return (
    <CainWindow>
      <TitleBar>
        <SysArrow><I w={8} h={5}><path d="M0 0h8L4 5z" fill="#111" /></I></SysArrow>
        <LogoSlot><CainLogo /></LogoSlot>
        <Captions>
          <Caption><CapMin /></Caption><Caption><CapMax /></Caption><Caption><CapX /></Caption>
        </Captions>
      </TitleBar>
      <MenuBar>{menu.map(([t, w]) => <Fit key={t} w={w}>{t}</Fit>)}</MenuBar>
      <ToolRow>
        <ToolBar>
          <Grip $l={4} $r={3} />
          <Tool><Folder /></Tool><Tool><SnifferIcon /></Tool><Tool><Radiation /></Tool>
          <Tool><PixelWords arrow rows={["NTLM", "AUTH"]} /></Tool>
          <Tool><PixelWords rows={["CHALL", "SPOOF", "RESET"]} /></Tool>
          <Tool><PixelWords rows={["CHALL", "SPOOF", "NTLM"]} /></Tool>
          <Tool><MonitorDown /></Tool>
          <Rule $h={40} $l={2} />
          <Grip $l={5} $r={2} />
          <Tool><Plus /></Tool><Tool><Bin /></Tool><ToolSep />
          <Tool><ConfigIcon /></Tool><ToolSep />
          <Tool><Base64 /></Tool><Tool><KeyDoc /></Tool><Tool><GreenBars label="7" /></Tool><Tool><GreenBars label="VPN" /></Tool>
          <Tool><RdcIcon /></Tool><Tool><CardIcon /></Tool><Tool><RingIcon /></Tool><Tool><Computers /></Tool><Tool><GoldKey /></Tool>
          <ToolSep /><Tool><InfoIcon /></Tool><Tool><HelpIcon /></Tool><ToolSep />
          <Tool><DoorIcon /></Tool>
        </ToolBar>
      </ToolRow>
      <TabRow $h={37} $t={7}>
        {topTabs.map(([t, w, tw, r, Icon]) => (
          <CainTab key={t} $w={w} $r={r} $on={t === "Sniffer"}><Icon /><Fit w={tw}>{t}</Fit></CainTab>
        ))}
        <TabBaseline />
      </TabRow>
      <ListFrame>
        <ListHead>{columns.map(([t, w, tw], i) => <HeadCell key={i} $w={w}><Fit w={tw}>{t}</Fit></HeadCell>)}</ListHead>
        <ListBody>{columns.map(([, w], i) => <ListColumn key={i} $w={w} />)}</ListBody>
      </ListFrame>
      <TabRow $h={36} $t={3}>
        {lowTabs.map(([t, w, tw, r, Icon]) => (
          <CainTab key={t} $w={w} $r={r} $low $on={t === "Hosts"}><Icon /><Fit w={tw}>{t}</Fit></CainTab>
        ))}
        <TabBaseline $low />
      </TabRow>
      <StatusBar>
        <Fit w={121}>http://www.oxid.it</Fit>
        <I w={16} h={22}><path d="M2 20L15 7M7 20l8-8M12 20l3-3" stroke="#999" strokeWidth="1.400" /></I>
      </StatusBar>
    </CainWindow>
  );
}

function WarningDialog() {
  return (
    <Dialog>
      <DialogTitle><Fit w={29}>Cain</Fit><CloseX s={13} c="#fff" t={1.2} /></DialogTitle>
      <DialogBody>
        <IconDrop><WarnIcon /></IconDrop>
        <Message>
          {message.map((m, i) => <MessageLine key={i}>{m && <Fit w={m[1]}>{m[0]}</Fit>}</MessageLine>)}
        </Message>
      </DialogBody>
      <DialogFoot><OkButton><Fit w={20}>OK</Fit></OkButton></DialogFoot>
    </Dialog>
  );
}

function Tasks() {
  return (
    <TaskBar>
      <StartButton><I w={20}><path d="M0 3l8.500-1.300V9.500H0zM9.500 1.500L20 0v9.500H9.500zM0 10.500h8.500v7.800L0 17zM9.500 10.500H20V20L9.500 18.500z" fill="#fff" /></I></StartButton>
      <Cortana><I w={27}><circle cx="13.500" cy="13.500" r="11.500" stroke="#fff" strokeWidth="3.200" /></I><Fit w={238}>I'm Cortana. Ask me anything.</Fit></Cortana>
      <TaskButton $m={4}><I w={24} h={18}><path d="M5.500 .5h13v17h-13zM3.500 3h-3v12h3M20.500 3h3v12h-3" stroke="#fff" strokeWidth="1.200" /></I></TaskButton>
      <TaskButton $m={11}><I w={28} h={24}><path d="M1 0h10l2 3h14v20H1z" fill="#f7d774" /><path d="M1 5h26v18H1z" fill="#fde69a" /><path d="M5 23v-8q0-2 2-2h14q2 0 2 2v8h-5v-5h-8v5z" fill="#36b1e6" /><path d="M3 2h6" stroke="#3aa557" strokeWidth="1.500" /></I></TaskButton>
      <TaskButton $line="#ffb0d8"><I w={26} h={27}><path d="M14 3h11v21H14z" fill="#fff" stroke="#2a5699" /><path d="M16 8h7M16 11h7M16 14h7M16 17h7M16 20h7" stroke="#2a5699" strokeWidth="1.300" /><path d="M0 3l16-3v27L0 24z" fill="#2a5699" /><path d="M3 9l2.300 9L8 10l2.700 8L13 9" stroke="#fff" strokeWidth="1.800" /></I></TaskButton>
      <TaskButton $line="#ffb0d8"><I w={32} h={32}><circle cx="14" cy="14" r="13" fill="#2ca5e0" /><path d="M5 14l17-7-3 14-5-4-2 3-1-5z" fill="#fff" /><rect x="11" y="17" width="20" height="14" rx="4" fill="#f0353b" /><text x="13" y="28" fontSize="10" textLength="16" fontFamily="Open Sans, sans-serif" fill="#fff">357</text></I></TaskButton>
      <TaskButton><I w={26} h={26}><path d="M1 12Q3 1 14 1q11 1 11 14H9q1 5 7 5 4 0 7.500-2v5Q20 25 15 25q-11-1-11-10 0-5 5-8-5 1-8 5zM9.500 11h9q0-5-4.500-5t-4.500 5z" fill="#0a7be0" fillRule="evenodd" /></I></TaskButton>
      <TaskButton $line="#ffb0d8"><I w={28}><circle cx="14" cy="14" r="13" fill="#e66a00" /><circle cx="15.500" cy="11.500" r="9.500" fill="#2f72c4" /><path d="M1.500 9Q3 4 6 2l1 4q5 0 5 3l-3 3q0 5 6 5 6-1 6-6 3 1 2 7-3 9-11 9Q2 25 1.500 9z" fill="#f58a07" /><path d="M22 5q6 6 4 13-3 5-6 6 5-8 2-19z" fill="#ffc61a" /></I></TaskButton>
      <TaskButton><I w={28}><circle cx="14" cy="14" r="13" fill="#fbc117" /><path d="M2.800 7.500A13 13 0 0 1 25.500 8H14L8.500 17z" fill="#e33b2e" /><path d="M2.700 7.500A13 13 0 0 0 13 27l6-10H8.500z" fill="#2fa24c" /><circle cx="14" cy="14" r="6" fill="#fff" /><circle cx="14" cy="14" r="4.700" fill="#3f7fe8" /></I></TaskButton>
      <TaskButton $m={9}><I w={26} h={24}><rect x="1" y="1" width="21" height="22" fill="#7cb8dc" /><rect x="18" y="4" width="7" height="18" fill="#b9d9ec" /><circle cx="11" cy="12" r="8.500" fill="#f47c14" stroke="#fff" /><path d="M8.500 7.500v9l7-4.500z" fill="#fff" /></I></TaskButton>
      <TaskButton $m={11}><I w={28} h={22}><path d="M1 11Q2 1 13 1q10 0 13 9l1.500 8-4-3 0 5-4-5-5-1-2 3 6 3-7 1Q4 18 1 11z" fill="#d5d5d5" /><path d="M3 9q6-7 15-2l6 7-5-2-6-1-4 3-3 4Q3 14 3 9z" fill="#2c2c2c" /><path d="M5 6q6-5 13-1" stroke="#fff" strokeWidth="1.200" /></I></TaskButton>
      <TaskButton><I w={30} h={28}><path d="M21 1l8 3v20l-8 3L8 16l-5 4-2-1V9l2-1 5 4zM4 11.500v5L7 14zM21 8l-8 6 8 6z" fill="#7a3fae" stroke="#e6d8f2" strokeWidth="1.200" fillRule="evenodd" /></I></TaskButton>
      <TaskButton><I w={28}><circle cx="14" cy="14" r="13.500" fill="#ece6f4" /><path d="M6 7l4 1.500q4-1 8 0L22 7q1 3 0 5 3 8-5 9l.5 6h-7v-3q-4 1-5-3 2 1 5 0-5-2-4-9-1-2-.5-5z" fill="#3a2068" /></I></TaskButton>
      <TaskButton><I w={28} h={29}><rect x="1" y="1" width="26" height="27" rx="10" fill="#fff" stroke="#0a8a88" strokeWidth="2.500" /><path d="M9 15h10.500q0-6-5.500-6t-5.500 6 5.500 6q3 0 5-1.500" stroke="#07605f" strokeWidth="3" /></I></TaskButton>
      <TaskButton $bg="linear-gradient(90deg, #595a3d 55%, #5a2145 55%)" $line="#55e640"><I w={30}><circle cx="12" cy="19" r="9.500" stroke="#e23b2a" strokeWidth="2.500" /><circle cx="13" cy="18.500" r="7.500" stroke="#f5c52a" strokeWidth="2.500" /><circle cx="14" cy="18" r="5.500" stroke="#3fa0e0" strokeWidth="2" /><circle cx="15" cy="18" r="4.500" fill="#2fb84a" /><circle cx="19" cy="9" r="8.500" fill="#4a86d8" /><path d="M14 3q6-3 9 2l-2 6-5 1-3-4z" fill="#e9dfa0" /><path d="M14 17l15 0-6 10-4-4-5 2z" fill="#12a12a" /></I></TaskButton>
      <TaskButton $m={6} $w={61} $bg="#8f1656" $line="#ffb0d8"><CainLogo w={30} h={30} /></TaskButton>
      <Tray>
        <I w={16} h={10}><path d="M1 9l7-7 7 7" stroke="#fff" strokeWidth="1.400" /></I>
        <I w={18} h={18}><path d="M2 17A14 14 0 0 1 16 2M6 17A10.500 10.500 0 0 1 16.500 6.500M10 17a7 7 0 0 1 7-6.500" stroke="#fff" strokeWidth="1.200" /><circle cx="15.500" cy="15.500" r="1.800" fill="#fff" /></I>
        <I w={20} h={16}><path d="M2 0v3M5 0v3M.5 3.500h6v2q-3 3-6 0zM3.500 7v6h2" stroke="#fff" /><rect x="8" y="5" width="9.500" height="7" fill="#fff" /><path d="M6 3h13.500v11H6z" stroke="#fff" /></I>
        <I w={19} h={16}><path d="M1 5h3l4-4v14l-4-4H1z" stroke="#fff" strokeWidth="1.100" /><path d="M12 5.500l5.500 5.500M17.500 5.500L12 11" stroke="#fff" strokeWidth="1.200" /></I>
        <I w={20} h={20}><path d="M0 0h20v16h-7l-3 4-3-4H0z" fill="#fff" /><path d="M4 4.500h12M4 8h12M4 11.500h8" stroke="#4a0430" strokeWidth="1.400" /></I>
        <Fit w={29}>ENG</Fit>
        <Clock><Fit w={52}>3:36 PM</Fit><Fit w={68}>5/15/2016</Fit></Clock>
        <Peek />
      </Tray>
    </TaskBar>
  );
}

export default function App() {
  return (
    <Screen>
      <Global />
      <BrowserChrome />
      <WebPage />
      <Tasks />
      <Cain />
      <WarningDialog />
    </Screen>
  );
}
